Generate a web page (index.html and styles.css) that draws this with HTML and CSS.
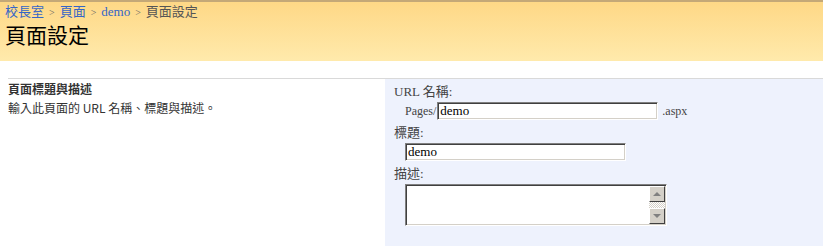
FILE: index.html
```html
<!DOCTYPE html>
<html lang="zh-Hant">
<head>
  <meta charset="UTF-8" />
  <title>頁面設定</title>
  <link rel="stylesheet" href="styles.css">
</head>
<body>
  <div class="header">
    <div class="crumbs">
      <a href="#">校長室</a><span class="sep">&gt;</span><a href="#">頁面</a><span class="sep">&gt;</span><a href="#">demo</a><span class="sep">&gt;</span><span class="current">頁面設定</span>
    </div>
    <h1>頁面設定</h1>
  </div>

  <div class="section">
    <div class="section-info">
      <h3>頁面標題與描述</h3>
      <p>輸入此頁面的 URL 名稱、標題與描述。</p>
    </div>
    <div class="section-fields">
      <label>URL 名稱:</label>
      <div class="field-row">
        <span class="prefix">Pages/</span><input type="text" class="text url" value="demo" /><span class="suffix">.aspx</span>
      </div>
      <label>標題:</label>
      <div class="field-row">
        <input type="text" class="text title" value="demo" />
      </div>
      <label>描述:</label>
      <div class="field-row">
        <div class="memo">
          <textarea></textarea>
          <div class="scroll">
            <div class="scroll-btn up"></div>
            <div class="scroll-track"></div>
            <div class="scroll-btn down"></div>
          </div>
        </div>
      </div>
    </div>
  </div>
</body>
</html>
```

FILE: styles.css
```css
body {
  margin: 0;
  font-family: "Liberation Serif", "Noto Sans CJK TC", serif;
  font-size: 13px;
  color: #333;
  background: #fff;
}

.header {
  height: 57px;
  padding: 2px 5px 0;
  border-top: 2px solid #c4a877;
  background: linear-gradient(#fed886, #ffeaac);
}

.crumbs {
  font-size: 13px;
  line-height: 16px;
  color: #555;
}

.crumbs a {
  color: #3465c8;
  text-decoration: none;
}

.sep {
  margin: 0 5px;
  font-size: 10px;
  color: #666;
}

h1 {
  margin: 0;
  font-family: "Noto Sans CJK TC", sans-serif;
  font-weight: 400;
  font-size: 21px;
  line-height: 26px;
  color: #000;
}

.section {
  display: flex;
  margin: 17px 0 0 8px;
  border-top: 1px solid #d9d9d9;
  min-height: 167px;
}

.section-info {
  width: 377px;
}

.section-info h3 {
  margin: 2px 0 0;
  font-family: "Noto Sans CJK TC", sans-serif;
  font-size: 12px;
  line-height: 16px;
  font-weight: bold;
  color: #333;
}

.section-info p {
  margin: 3px 0 0;
  font-family: "Noto Sans CJK TC", sans-serif;
  font-size: 12px;
  line-height: 16px;
  color: #333;
}

.section-fields {
  flex: 1;
  background: #eef2fd;
  padding: 5px 0 0 9px;
}

.section-fields label {
  display: block;
  font-family: "Liberation Serif", "Noto Sans CJK TC", serif;
  font-size: 13px;
  line-height: 16px;
  color: #444;
}

.field-row {
  display: flex;
  align-items: center;
  padding-left: 11px;
  margin: 2px 0 5px;
}

.prefix, .suffix {
  font-size: 12px;
  color: #444;
}

.prefix {
  margin-right: 1px;
}

.suffix {
  margin-left: 4px;
}

.text {
  box-sizing: border-box;
  height: 18px;
  padding: 0 2px;
  font-family: "Liberation Serif", serif;
  font-size: 13px;
  color: #000;
  background: #fff;
  border: 1px solid;
  border-color: #808080 #fff #fff #808080;
  box-shadow: inset 1px 1px 0 #404040, inset -1px -1px 0 #d4d0c8;
  outline: none;
}

.url {
  width: 221px;
}

.title {
  width: 221px;
}

.memo {
  display: flex;
  box-sizing: border-box;
  width: 262px;
  height: 42px;
  border: 1px solid;
  border-color: #808080 #fff #fff #808080;
  box-shadow: inset 1px 1px 0 #404040, inset -1px -1px 0 #d4d0c8;
  background: #fff;
  padding: 1px;
}

.memo textarea {
  flex: 1;
  border: none;
  resize: none;
  outline: none;
  margin: 0;
  padding: 0;
}

.scroll {
  width: 16px;
  display: flex;
  flex-direction: column;
}

.scroll-btn {
  box-sizing: border-box;
  height: 16px;
  background: #d4d0c8;
  border: 1px solid;
  border-color: #fff #404040 #404040 #fff;
  position: relative;
}

.scroll-btn::after {
  content: "";
  position: absolute;
  left: 3px;
  width: 0;
  height: 0;
  border-left: 4px solid transparent;
  border-right: 4px solid transparent;
}

.up::after {
  top: 5px;
  border-bottom: 4px solid #808080;
}

.down::after {
  top: 5px;
  border-top: 4px solid #808080;
}

.scroll-track {
  flex: 1;
  background: repeating-conic-gradient(#d4d0c8 0 25%, #fff 0 50%) 0 0 / 2px 2px;
}
```
